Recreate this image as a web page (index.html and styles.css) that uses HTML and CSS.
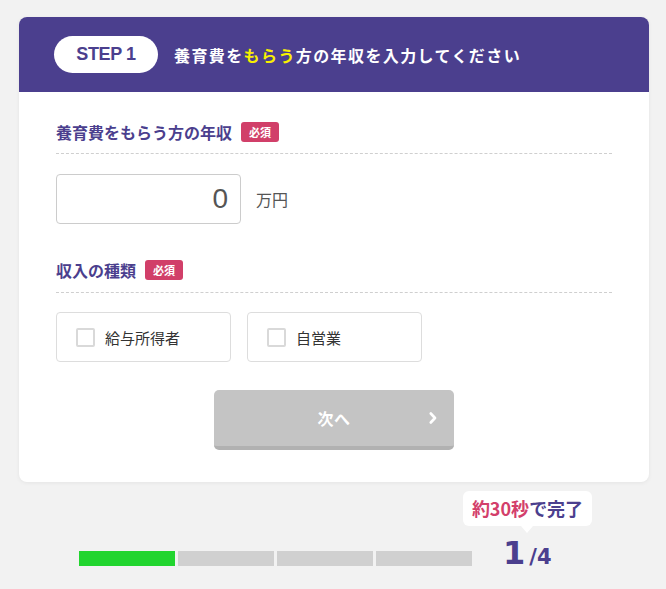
FILE: index.html
```html
<!DOCTYPE html>
<html lang="ja">
<head>
<meta charset="utf-8">
<title>STEP 1</title>
<link rel="stylesheet" href="styles.css">
</head>
<body>
<div class="page">
  <div class="card">
    <div class="card-head">
      <div class="step-pill">STEP 1</div>
      <h1 class="head-title">養育費を<span class="hl">もらう</span>方の年収を入力してください</h1>
    </div>
    <div class="card-body">
      <div class="field-label">
        <span class="label-text">養育費をもらう方の年収</span>
        <span class="badge">必須</span>
      </div>
      <div class="income-row">
        <div class="income-input">0</div>
        <span class="unit">万円</span>
      </div>

      <div class="field-label second">
        <span class="label-text">収入の種類</span>
        <span class="badge">必須</span>
      </div>
      <div class="choice-row">
        <div class="choice"><span class="checkbox"></span><span class="choice-text">給与所得者</span></div>
        <div class="choice"><span class="checkbox"></span><span class="choice-text">自営業</span></div>
      </div>

      <div class="btn-wrap">
        <div class="next-btn">
          <span class="next-text">次へ</span>
          <svg class="chev" width="8" height="12" viewBox="0 0 8 12"><path d="M1.8 1.5 L6 6 L1.8 10.5" fill="none" stroke="#fff" stroke-width="2.6" stroke-linecap="round" stroke-linejoin="round"/></svg>
        </div>
      </div>
    </div>
  </div>

  <div class="progress-row">
    <div class="bar">
      <span class="seg done"></span>
      <span class="seg"></span>
      <span class="seg"></span>
      <span class="seg"></span>
    </div>
    <div class="step-count">
      <div class="tip"><span class="tip-pink">約30秒</span>で完了</div>
      <span class="cur">1</span><span class="total">/4</span>
    </div>
  </div>
</div>
</body>
</html>
```

FILE: styles.css
```css
* { box-sizing: border-box; }
html, body { margin: 0; padding: 0; }
body {
  background: #f2f2f2;
  font-family: "Noto Sans CJK JP", "Noto Sans", sans-serif;
  width: 666px;
  height: 589px;
  overflow: hidden;
}
.page {
  padding: 17px 17px 0 19px;
}
.card {
  width: 630px;
  background: #fff;
  border-radius: 8px;
  overflow: hidden;
  box-shadow: 0 1px 4px rgba(0, 0, 0, 0.06);
}
.card-head {
  height: 75px;
  background: #4b3f8e;
  display: flex;
  align-items: center;
  padding-left: 35px;
}
.step-pill {
  width: 104px;
  height: 37px;
  border-radius: 19px;
  background: #fff;
  color: #4b3f8e;
  font-family: "Liberation Sans", Arial, sans-serif;
  font-weight: bold;
  font-size: 18px;
  display: flex;
  align-items: center;
  justify-content: center;
  letter-spacing: -0.4px;
}
.head-title {
  margin: 0 0 0 16px;
  color: #fff;
  font-size: 16px;
  font-weight: bold;
  letter-spacing: 1.4px;
  line-height: 1;
}
.hl { color: #f8f000; }

.card-body {
  padding: 30px 37px 32px;
}
.field-label {
  display: flex;
  align-items: center;
  height: 32px;
  padding-bottom: 11px;
  border-bottom: 1px dashed #cfcfcf;
}
.field-label.second { margin-top: 36px; height: 33px; padding-bottom: 12px; }
.label-text {
  color: #4b3f8e;
  font-size: 16px;
  font-weight: bold;
  line-height: 20px;
}
.badge {
  margin-left: 9px;
  width: 38px;
  height: 20px;
  border-radius: 3px;
  background: #d13f69;
  color: #fff;
  font-size: 11px;
  font-weight: bold;
  display: flex;
  align-items: center;
  justify-content: center;
}
.income-row {
  margin-top: 20px;
  display: flex;
  align-items: center;
}
.income-input {
  width: 185px;
  height: 50px;
  border: 1px solid #cccccc;
  border-radius: 4px;
  text-align: right;
  padding-right: 12px;
  font-family: "Liberation Sans", Arial, sans-serif;
  font-size: 28px;
  line-height: 48px;
  color: #555;
}
.unit {
  margin-left: 15px;
  font-size: 16px;
  color: #555;
}
.choice-row {
  margin-top: 19px;
  display: flex;
  gap: 16px;
}
.choice {
  width: 175px;
  height: 50px;
  border: 1px solid #dddddd;
  border-radius: 4px;
  display: flex;
  align-items: center;
  padding-left: 19px;
}
.checkbox {
  width: 19px;
  height: 19px;
  border: 2px solid #d9d9d9;
  border-radius: 2px;
  background: #fff;
}
.choice-text {
  margin-left: 10px;
  font-size: 15px;
  color: #333;
}
.btn-wrap {
  margin-top: 28px;
  display: flex;
  justify-content: center;
}
.next-btn {
  position: relative;
  width: 240px;
  height: 60px;
  background: #c4c4c4;
  border-bottom: 4px solid #b1b1b1;
  border-radius: 5px;
  display: flex;
  align-items: center;
  justify-content: center;
}
.next-text {
  color: #fff;
  font-size: 16px;
  font-weight: bold;
  letter-spacing: 0.5px;
}
.chev {
  position: absolute;
  right: 17px;
  top: 22px;
}

.progress-row {
  display: flex;
  align-items: flex-end;
  padding-top: 55px;
  padding-left: 60px;
}
.bar {
  display: flex;
  gap: 3px;
}
.seg {
  width: 96px;
  height: 15px;
  background: #d0d0d0;
}
.seg.done { background: #22d52f; }
.step-count {
  position: relative;
  margin-left: 31px;
  margin-bottom: -9px;
  font-family: "DejaVu Sans", sans-serif;
  font-weight: bold;
  color: #4b3f8e;
  line-height: 32px;
  white-space: nowrap;
}
.cur { font-size: 32px; }
.total { font-size: 21px; margin-left: 4px; }
.tip {
  position: absolute;
  bottom: calc(100% + 11px);
  left: -40px;
  width: 129px;
  height: 35px;
  background: #fff;
  border-radius: 6px;
  text-align: center;
  font-family: "Noto Sans CJK JP", sans-serif;
  font-size: 18px;
  line-height: 35px;
  color: #4b3f8e;
}
.tip::after {
  content: "";
  position: absolute;
  left: 58px;
  top: 100%;
  border-left: 6px solid transparent;
  border-right: 6px solid transparent;
  border-top: 7px solid #fff;
}
.tip-pink { color: #d33f6b; }
```
